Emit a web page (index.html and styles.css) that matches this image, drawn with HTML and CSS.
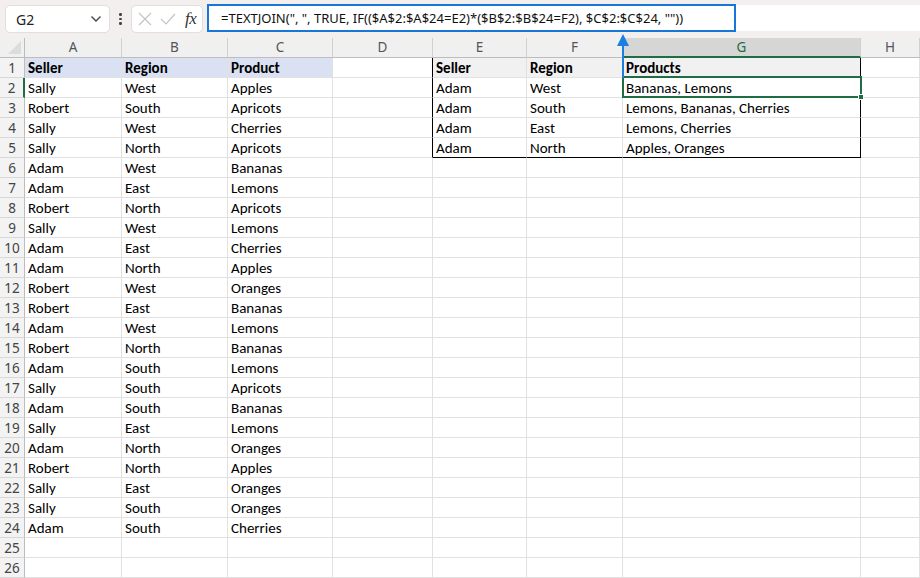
FILE: index.html
```html
<!DOCTYPE html>
<html>
<head>
<meta charset="utf-8">
<link rel="stylesheet" href="styles.css">
</head>
<body>
<div class="app">
  <div class="topbar">
    <div class="namebox"><span class="nb-text">G2</span>
      <svg class="chev" width="12" height="8" viewBox="0 0 12 8"><path d="M1.5 1.5 L6 6 L10.5 1.5" fill="none" stroke="#444" stroke-width="1.4"/></svg>
    </div>
    <div class="vdots"><span></span><span></span><span></span></div>
    <div class="fnbox">
      <svg width="14" height="14" viewBox="0 0 14 14"><path d="M1 1 L13 13 M13 1 L1 13" stroke="#c4c4c4" stroke-width="1.2" fill="none"/></svg>
      <svg width="16" height="14" viewBox="0 0 16 14"><path d="M1 7 L6 12 L15 2" stroke="#c4c4c4" stroke-width="1.2" fill="none"/></svg>
      <span class="fx">fx</span>
    </div>
    <div class="formula">
      <div class="fbox">=TEXTJOIN(", ", TRUE, IF(($A$2:$A$24=E2)*($B$2:$B$24=F2), $C$2:$C$24, ""))</div>
    </div>
  </div>
  <div class="sheet">
    <div class="grid">
      <div class="corner"></div><div class="ch">A</div><div class="ch">B</div><div class="ch">C</div><div class="ch">D</div><div class="ch">E</div><div class="ch">F</div><div class="ch chsel">G</div><div class="ch">H</div>

      <div class="rh">1</div><div class="c hb">Seller</div><div class="c hb">Region</div><div class="c hb">Product</div><div class="c tl"></div><div class="c hg">Seller</div><div class="c hg">Region</div><div class="c hg tr">Products</div><div class="c"></div>
      <div class="rh rhsel">2</div><div class="c">Sally</div><div class="c">West</div><div class="c">Apples</div><div class="c tl"></div><div class="c">Adam</div><div class="c">West</div><div class="c tr">Bananas, Lemons</div><div class="c"></div>
      <div class="rh">3</div><div class="c">Robert</div><div class="c">South</div><div class="c">Apricots</div><div class="c tl"></div><div class="c">Adam</div><div class="c">South</div><div class="c tr">Lemons, Bananas, Cherries</div><div class="c"></div>
      <div class="rh">4</div><div class="c">Sally</div><div class="c">West</div><div class="c">Cherries</div><div class="c tl"></div><div class="c">Adam</div><div class="c">East</div><div class="c tr">Lemons, Cherries</div><div class="c"></div>
      <div class="rh">5</div><div class="c">Sally</div><div class="c">North</div><div class="c">Apricots</div><div class="c tl"></div><div class="c tb">Adam</div><div class="c tb">North</div><div class="c tr tb">Apples, Oranges</div><div class="c"></div>
      <div class="rh">6</div><div class="c">Adam</div><div class="c">West</div><div class="c">Bananas</div><div class="c"></div><div class="c"></div><div class="c"></div><div class="c"></div><div class="c"></div>
      <div class="rh">7</div><div class="c">Adam</div><div class="c">East</div><div class="c">Lemons</div><div class="c"></div><div class="c"></div><div class="c"></div><div class="c"></div><div class="c"></div>
      <div class="rh">8</div><div class="c">Robert</div><div class="c">North</div><div class="c">Apricots</div><div class="c"></div><div class="c"></div><div class="c"></div><div class="c"></div><div class="c"></div>
      <div class="rh">9</div><div class="c">Sally</div><div class="c">West</div><div class="c">Lemons</div><div class="c"></div><div class="c"></div><div class="c"></div><div class="c"></div><div class="c"></div>
      <div class="rh">10</div><div class="c">Adam</div><div class="c">East</div><div class="c">Cherries</div><div class="c"></div><div class="c"></div><div class="c"></div><div class="c"></div><div class="c"></div>
      <div class="rh">11</div><div class="c">Adam</div><div class="c">North</div><div class="c">Apples</div><div class="c"></div><div class="c"></div><div class="c"></div><div class="c"></div><div class="c"></div>
      <div class="rh">12</div><div class="c">Robert</div><div class="c">West</div><div class="c">Oranges</div><div class="c"></div><div class="c"></div><div class="c"></div><div class="c"></div><div class="c"></div>
      <div class="rh">13</div><div class="c">Robert</div><div class="c">East</div><div class="c">Bananas</div><div class="c"></div><div class="c"></div><div class="c"></div><div class="c"></div><div class="c"></div>
      <div class="rh">14</div><div class="c">Adam</div><div class="c">West</div><div class="c">Lemons</div><div class="c"></div><div class="c"></div><div class="c"></div><div class="c"></div><div class="c"></div>
      <div class="rh">15</div><div class="c">Robert</div><div class="c">North</div><div class="c">Bananas</div><div class="c"></div><div class="c"></div><div class="c"></div><div class="c"></div><div class="c"></div>
      <div class="rh">16</div><div class="c">Adam</div><div class="c">South</div><div class="c">Lemons</div><div class="c"></div><div class="c"></div><div class="c"></div><div class="c"></div><div class="c"></div>
      <div class="rh">17</div><div class="c">Sally</div><div class="c">South</div><div class="c">Apricots</div><div class="c"></div><div class="c"></div><div class="c"></div><div class="c"></div><div class="c"></div>
      <div class="rh">18</div><div class="c">Adam</div><div class="c">South</div><div class="c">Bananas</div><div class="c"></div><div class="c"></div><div class="c"></div><div class="c"></div><div class="c"></div>
      <div class="rh">19</div><div class="c">Sally</div><div class="c">East</div><div class="c">Lemons</div><div class="c"></div><div class="c"></div><div class="c"></div><div class="c"></div><div class="c"></div>
      <div class="rh">20</div><div class="c">Adam</div><div class="c">North</div><div class="c">Oranges</div><div class="c"></div><div class="c"></div><div class="c"></div><div class="c"></div><div class="c"></div>
      <div class="rh">21</div><div class="c">Robert</div><div class="c">North</div><div class="c">Apples</div><div class="c"></div><div class="c"></div><div class="c"></div><div class="c"></div><div class="c"></div>
      <div class="rh">22</div><div class="c">Sally</div><div class="c">East</div><div class="c">Oranges</div><div class="c"></div><div class="c"></div><div class="c"></div><div class="c"></div><div class="c"></div>
      <div class="rh">23</div><div class="c">Sally</div><div class="c">South</div><div class="c">Oranges</div><div class="c"></div><div class="c"></div><div class="c"></div><div class="c"></div><div class="c"></div>
      <div class="rh">24</div><div class="c">Adam</div><div class="c">South</div><div class="c">Cherries</div><div class="c"></div><div class="c"></div><div class="c"></div><div class="c"></div><div class="c"></div>
      <div class="rh">25</div><div class="c"></div><div class="c"></div><div class="c"></div><div class="c"></div><div class="c"></div><div class="c"></div><div class="c"></div><div class="c"></div>
      <div class="rh">26</div><div class="c"></div><div class="c"></div><div class="c"></div><div class="c"></div><div class="c"></div><div class="c"></div><div class="c"></div><div class="c"></div>
    </div>
    <div class="selection"><span class="handle"></span></div>
    <svg class="arrow" width="16" height="46" viewBox="0 0 16 46"><path d="M8 4 V46" stroke="#1a7fe0" stroke-width="2"/><path d="M2 14 L8 2 L14 14 Z" fill="#1a7fe0"/></svg>
  </div>
</div>
</body>
</html>
```

FILE: styles.css
```css
* { box-sizing: border-box; }
html, body { margin: 0; padding: 0; }
body { width: 920px; height: 578px; overflow: hidden; background: #fff; }
.app { width: 920px; height: 578px; overflow: hidden; }

.topbar {
  height: 38px;
  background: #f4efef;
  display: flex;
  align-items: flex-start;
  padding: 5px 0 0 5px;
  font-family: "Noto Sans", "Open Sans", sans-serif;
}
.namebox {
  width: 105px; height: 28px;
  background: #fff;
  border: 1px solid #e3dede;
  border-radius: 5px;
  display: flex; align-items: center; justify-content: space-between;
  padding: 0 7px 0 10px;
  font-size: 14px; color: #222;
}
.vdots {
  width: 21px; height: 28px;
  display: flex; flex-direction: column; align-items: center; justify-content: center; gap: 2px;
}
.vdots span { width: 2.5px; height: 2.5px; background: #444; border-radius: 50%; }
.fnbox {
  width: 72px; height: 28px;
  background: #fff;
  border: 1px solid #e3dede;
  border-radius: 5px;
  display: flex; align-items: center; gap: 8px;
  padding: 0 0 0 6px;
}
.fx {
  font-family: "Liberation Serif", "DejaVu Serif", serif;
  font-style: italic; font-size: 17px; color: #333;
  margin-left: 1px; letter-spacing: -0.5px;
}
.formula {
  flex: 1;
  height: 26px;
  margin-left: 4px;
  background: #fff;
}
.fbox {
  width: 529px; height: 28px;
  margin-top: -1px;
  border: 2px solid #1677d9;
  padding-left: 12px;
  font-size: 13px;
  line-height: 24px;
  color: #111;
  white-space: nowrap;
}

.sheet { position: relative; }
.grid {
  display: grid;
  grid-template-columns: 25px 97px 106px 105px 100px 94px 96px 238px 59px;
  grid-auto-rows: 20px;
  font-family: "Carlito", "Lato", sans-serif;
  font-size: 15px;
}
.corner {
  background: #f0f0f0;
  border-right: 1px solid #bdbdbd;
  border-bottom: 1px solid #bdbdbd;
  position: relative;
}
.corner::after {
  content: ""; position: absolute; right: 3px; bottom: 3px;
  border-left: 13px solid transparent;
  border-bottom: 13px solid #dcdcdc;
}
.ch {
  background: #f0f0f0;
  border-right: 1px solid #d0d0d0;
  border-bottom: 1px solid #bdbdbd;
  text-align: center;
  color: #555;
  font-family: "Noto Sans", "Open Sans", sans-serif;
  font-size: 13.5px;
  line-height: 19px;
}
.chsel {
  background: #d6d6d6;
  color: #1f6e43;
  border-bottom: 2px solid #1f6e43;
}
.rh {
  background: #f3f3f3;
  border-right: 1px solid #bdbdbd;
  border-bottom: 1px solid #d8d8d8;
  text-align: center;
  color: #444;
  font-family: "Noto Sans", "Open Sans", sans-serif;
  font-size: 13.5px;
  line-height: 20px;
}
.rhsel { border-right: 2px solid #1f6e43; }
.c {
  border-right: 1px solid #e1e1e1;
  border-bottom: 1px solid #e1e1e1;
  padding: 1px 0 0 3px;
  line-height: 19px;
  color: #000;
  white-space: nowrap;
  overflow: hidden;
}
.hb { background: #d9e1f2; font-weight: bold; }
.hg { background: #f1f1f1; font-weight: bold; }
.tl { border-right: 1px solid #000; }
.tr { border-right: 1px solid #000; }
.tb { border-bottom: 1px solid #000; }

.selection {
  position: absolute;
  left: 622px; top: 38px;
  width: 240px; height: 22px;
  border: 2px solid #1f6e43;
  pointer-events: none;
}
.handle {
  position: absolute; right: -4px; bottom: -4px;
  width: 6px; height: 6px; background: #1f6e43;
  border: 1px solid #fff;
}
.arrow {
  position: absolute;
  left: 615px; top: -6px;
  z-index: 2;
}
```
